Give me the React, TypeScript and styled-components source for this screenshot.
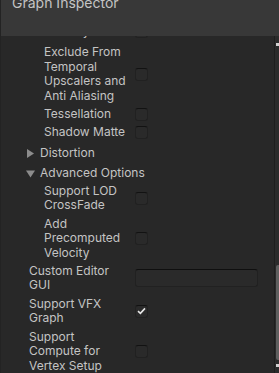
import styled, { createGlobalStyle } from "styled-components";

const GlobalStyle = createGlobalStyle`
  html, body {
    margin: 0;
    padding: 0;
    background: #282828;
  }
  body {
    font-family: Inter, "Noto Sans", sans-serif;
    -webkit-font-smoothing: antialiased;
  }
`;

const Window = styled.div`
  width: 279px;
  height: 373px;
  display: flex;
  flex-direction: column;
  overflow: hidden;
  background: #282828;
  border-left: 1px solid #232323;
  box-sizing: border-box;
`;

const Header = styled.div`
  height: 36px;
  flex: none;
  background: #383838;
  overflow: hidden;
  position: relative;
  z-index: 1;
`;

const Title = styled.div`
  margin: -6px 0 0 11px;
  font-size: 14px;
  line-height: 18px;
  color: #c4c4c4;
`;

const Body = styled.div`
  flex: 1;
  display: flex;
  min-height: 0;
`;

const Content = styled.div`
  flex: 1;
  overflow: hidden;
  min-width: 0;
`;

const List = styled.div`
  margin-top: -14px;
  padding-right: 16px;
`;

const Row = styled.div<{ $indent: number; $after?: number }>`
  display: flex;
  align-items: center;
  padding: 2px 0 ${({ $after }) => $after ?? 2}px ${({ $indent }) => $indent}px;
`;

const Label = styled.div<{ $indent: number }>`
  width: ${({ $indent }) => 129 - $indent}px;
  flex: none;
  font-size: 12px;
  line-height: 14.4px;
  color: #c4c4c4;
`;

const LabelText = styled.span`
  display: block;
  max-width: 88px;
`;

const Value = styled.div`
  flex: 1;
  display: flex;
  align-items: center;
  padding-left: 5px;
`;

const Box = styled.div`
  width: 13px;
  height: 13px;
  box-sizing: border-box;
  border-radius: 3px;
  background: #2a2a2a;
  border: 1px solid #212121;
  border-top-color: #121212;
  display: flex;
  align-items: center;
  justify-content: center;
`;

const Field = styled.div`
  flex: 1;
  height: 18px;
  box-sizing: border-box;
  border-radius: 3px;
  background: #2a2a2a;
  border: 1px solid #212121;
  border-top-color: #0f0f0f;
`;

const Foldout = styled.div`
  display: flex;
  align-items: center;
  padding: 4px 0 1.7px 25px;
  font-size: 12px;
  line-height: 14.4px;
  color: #c4c4c4;
`;

const Arrow = styled.span`
  width: 9px;
  margin-right: 5px;
  display: flex;
  align-items: center;
  justify-content: center;
`;

const Scrollbar = styled.div`
  width: 4px;
  flex: none;
  border-left: 1px solid #1e1e1e;
  background: #2b2b2b;
  display: flex;
  flex-direction: column;
  align-items: flex-end;
`;

const ScrollArrow = styled.div<{ $down?: boolean }>`
  width: 3px;
  height: 3px;
  margin: ${({ $down }) => ($down ? "4px 0 6px" : "7px 0 0")};
  background: #d0d0d0;
`;

const Track = styled.div`
  flex: 1;
  display: flex;
  flex-direction: column;
  justify-content: flex-end;
`;

const Thumb = styled.div`
  width: 3px;
  height: 95px;
  border-radius: 2px 0 0 2px;
  background: #5f5f5f;
`;

type Item =
  | { kind: "check"; label: string; indent: number; checked?: boolean; after?: number }
  | { kind: "field"; label: string; indent: number }
  | { kind: "fold"; label: string; open: boolean };

const items: Item[] = [
  { kind: "check", label: "Velocity", indent: 43, after: 5 },
  { kind: "check", label: "Exclude From Temporal Upscalers and Anti Aliasing", indent: 43 },
  { kind: "check", label: "Tessellation", indent: 43 },
  { kind: "check", label: "Shadow Matte", indent: 43 },
  { kind: "fold", label: "Distortion", open: false },
  { kind: "fold", label: "Advanced Options", open: true },
  { kind: "check", label: "Support LOD CrossFade", indent: 43 },
  { kind: "check", label: "Add Precomputed Velocity", indent: 43 },
  { kind: "field", label: "Custom Editor GUI", indent: 28 },
  { kind: "check", label: "Support VFX Graph", indent: 28, checked: true },
  { kind: "check", label: "Support Compute for Vertex Setup", indent: 28 },
];

const Check = () => (
  <svg width="9" height="8" viewBox="0 0 9 8">
    <path d="M1 4.2 L3.4 6.4 L8 1.4" fill="none" stroke="#e6e6e6" strokeWidth="1.6" />
  </svg>
);

const Triangle = ({ open }: { open: boolean }) => (
  <svg width="9" height="9" viewBox="0 0 9 9">
    {open ? <path d="M0 1.5 H9 L4.5 8.5 Z" fill="#8c8c8c" /> : <path d="M1 0 V9 L8 4.5 Z" fill="#8c8c8c" />}
  </svg>
);

export default function App() {
  return (
    <>
      <GlobalStyle />
      <Window>
        <Header>
          <Title>Graph Inspector</Title>
        </Header>
        <Body>
          <Content>
            <List>
              {items.map((it, i) => {
                if (it.kind === "fold") {
                  return (
                    <Foldout key={i}>
                      <Arrow>
                        <Triangle open={it.open} />
                      </Arrow>
                      {it.label}
                    </Foldout>
                  );
                }
                return (
                  <Row key={i} $indent={it.indent} $after={it.kind === "check" ? it.after : undefined}>
                    <Label $indent={it.indent}>
                      <LabelText>{it.label}</LabelText>
                    </Label>
                    <Value>
                      {it.kind === "field" ? <Field /> : <Box>{it.checked && <Check />}</Box>}
                    </Value>
                  </Row>
                );
              })}
            </List>
          </Content>
          <Scrollbar>
            <ScrollArrow />
            <Track>
              <Thumb />
            </Track>
            <ScrollArrow $down />
          </Scrollbar>
        </Body>
      </Window>
    </>
  );
}
